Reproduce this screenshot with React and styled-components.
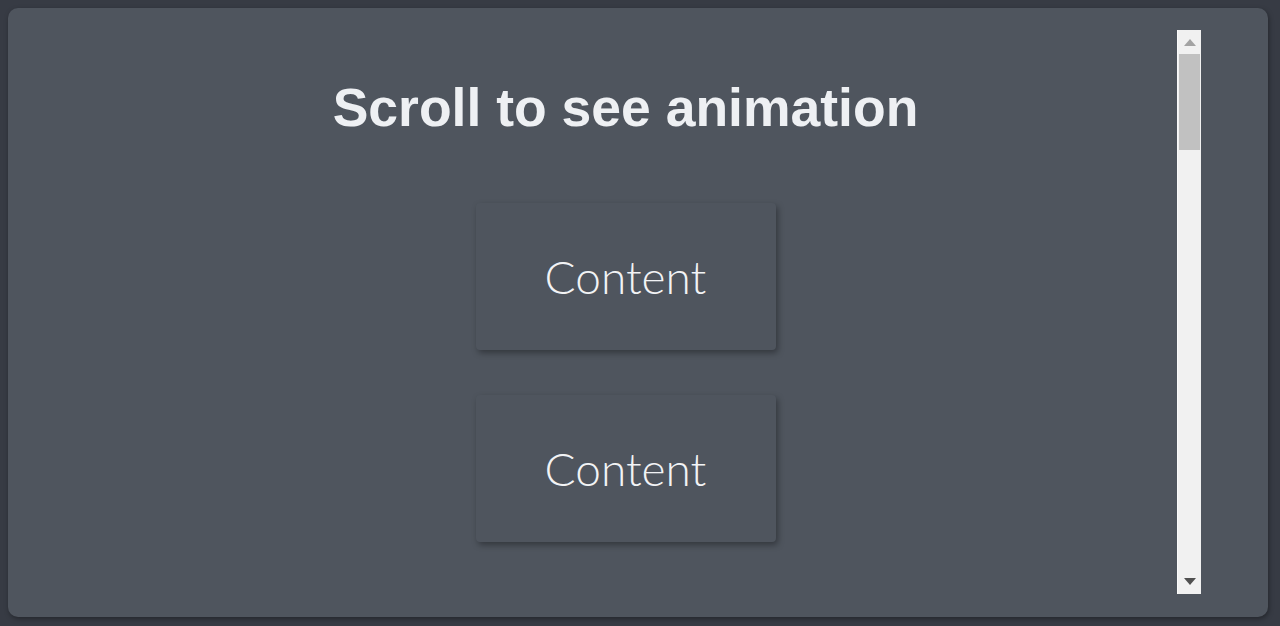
import styled, { createGlobalStyle } from 'styled-components';

const GlobalStyle = createGlobalStyle`
    html, body {
        margin: 0;
        padding: 0;
        background: #373b44;
    }
    body {
        padding: 8px;
        height: 626px;
        box-sizing: border-box;
        font-family: 'Liberation Sans', Arial, sans-serif;
    }
`;

const cards = ['Content', 'Content'];

const App = () => {
    return (
        <>
            <GlobalStyle />
            <Panel>
                <Stage>
                    <Title>Scroll to see animation</Title>
                    <CardList>
                        {cards.map((label, i) => (
                            <Card key={i}>{label}</Card>
                        ))}
                    </CardList>
                </Stage>
                <Scrollbar>
                    <Arrow $dir="up" />
                    <Track>
                        <Thumb />
                    </Track>
                    <Arrow $dir="down" />
                </Scrollbar>
            </Panel>
        </>
    );
};

export default App;

const Panel = styled.div`
    display: flex;
    width: 1260px;
    height: 609px;
    background: #4f555e;
    border-radius: 10px;
    box-shadow: 1px 2px 5px rgba(0, 0, 0, 0.35);
    padding: 22px 67px 23px 22px;
    box-sizing: border-box;
`;

const Stage = styled.div`
    flex: 1;
    display: flex;
    flex-direction: column;
    align-items: center;
    padding-left: 44px;
`;

const Title = styled.h1`
    margin: 48px 0 0;
    font-family: 'Liberation Sans', Arial, sans-serif;
    font-weight: 700;
    font-size: 53.5px;
    line-height: 60px;
    color: #eef0f3;
`;

const CardList = styled.div`
    display: flex;
    flex-direction: column;
    gap: 45px;
    margin-top: 65px;
`;

const Card = styled.div`
    width: 300px;
    height: 147px;
    display: flex;
    align-items: center;
    justify-content: center;
    background: #4f555e;
    border-radius: 4px;
    box-shadow: 2px 3px 6px rgba(0, 0, 0, 0.35);
    font-family: Lato, 'Open Sans', sans-serif;
    font-weight: 300;
    font-size: 46px;
    color: #f2f3f5;
`;

const Scrollbar = styled.div`
    width: 24px;
    display: flex;
    flex-direction: column;
    background: #f1f1f1;
    border-left: 1px solid #fafafa;
    box-sizing: border-box;
`;

const Arrow = styled.div`
    height: 24px;
    display: flex;
    align-items: center;
    justify-content: center;
    &::before {
        content: '';
        width: 0;
        height: 0;
        border-left: 6px solid transparent;
        border-right: 6px solid transparent;
        ${({ $dir }) =>
            $dir === 'up'
                ? 'border-bottom: 7px solid #a3a3a3; margin-top: 1px;'
                : 'border-top: 7px solid #505050; margin-bottom: 2px;'}
    }
`;

const Track = styled.div`
    flex: 1;
    padding: 0 1px 0 1px;
`;

const Thumb = styled.div`
    height: 96px;
    background: #c1c1c1;
`;
